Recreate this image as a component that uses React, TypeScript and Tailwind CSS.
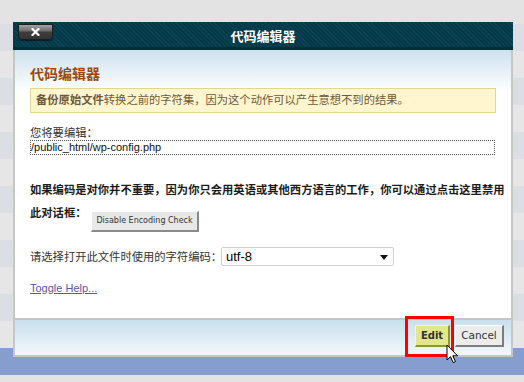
import React from "react";

const CJK = "font-['Liberation_Sans','Noto_Sans_CJK_SC',sans-serif]";

const STRIPES = Array.from({ length: 12 }, (_, i) => (i % 2 === 0 ? "bg-[#dbdfe4]" : "bg-[#e6e6e6]"));

function CloseButton() {
  return (
    <div className="ml-[5px] mt-[2px] w-[35px] h-[16px] rounded-b-[4px] border border-[#1d1d1d] bg-[linear-gradient(to_bottom,#a3a3a3_0px,#6b6b6b_6px,#3d3d3d_7px,#343434_100%)] shadow-[0_1px_1px_rgba(0,0,0,0.5)] flex items-center justify-center">
      <svg width="9" height="8" viewBox="0 0 9 8">
        <path d="M1.5 1 L7.5 7 M7.5 1 L1.5 7" stroke="#ffffff" strokeWidth="2.2" strokeLinecap="square" />
      </svg>
    </div>
  );
}

function Cursor() {
  return (
    <svg width="13" height="20" viewBox="0 0 13 20" className="absolute left-[446px] top-[344px]">
      <path
        d="M1 1 L1 16 L4.5 12.6 L7.2 18.6 L9.4 17.6 L6.8 11.8 L11.6 11.8 Z"
        fill="#ffffff"
        stroke="#000000"
        strokeWidth="1"
        strokeLinejoin="miter"
      />
    </svg>
  );
}

export default function App() {
  return (
    <div className={`relative w-[524px] h-[382px] overflow-hidden bg-[#e3e3e3] ${CJK}`}>
      {/* page behind the dialog */}
      <div className="flex flex-col h-full">
        <div className="h-[24px] shrink-0 bg-[#e3e3e3]" />
        {STRIPES.map((c, i) => (
          <div key={i} className={`h-[27px] shrink-0 ${c}`} />
        ))}
        <div className="h-[27px] shrink-0 bg-[#869dcf]" />
        <div className="flex-1 bg-[#e3e3e3]" />
      </div>

      {/* dialog */}
      <div className="absolute left-[13px] top-[22px] w-[500px] flex flex-col">
        <div className="h-[28px] border-b-[3px] border-[#032f3b] bg-[repeating-linear-gradient(45deg,#0b4354_0px,#0b4354_1px,#053a49_1px,#053a49_3px)] grid grid-cols-[1fr_auto_1fr] items-start">
          <CloseButton />
          <div className="text-white font-bold text-[13px] leading-[27px] mt-[1px]">代码编辑器</div>
          <div />
        </div>

        <div className="h-[268px] border-x-2 border-[#c6c6c6] bg-[linear-gradient(to_bottom,#cde1ee_0px,#ffffff_42px)] px-[15px] pt-[14px] flex flex-col">
          <div className="h-[20px] leading-[20px] text-[14px] font-bold text-[#9d4807]">代码编辑器</div>

          <div className="mt-[4px] h-[25px] border border-[#e4d78b] bg-[#fff5cf] px-[5px] text-[11.3px] leading-[23px] text-[#6e5a37]">
            <span className="font-bold">备份原始文件</span>转换之前的字符集，因为这个动作可以产生意想不到的结果。
          </div>

          <div className="mt-[13px] text-[11.3px] leading-[14px] text-[#333333]">您将要编辑：</div>
          <div className="w-[465px] h-[15px] border border-dotted border-[#555555] font-['Liberation_Sans',sans-serif] text-[11px] leading-[13px] text-[#111111]">
            /public_html/wp-config.php
          </div>

          <div className="mt-[23px] text-[11.3px] font-bold text-[#1c1c1c] leading-[24px] whitespace-nowrap">
            如果编码是对你并不重要，因为你只会用英语或其他西方语言的工作，你可以通过点击这里禁用
          </div>
          <div className="flex items-start">
            <div className="w-[61px] shrink-0 whitespace-nowrap text-[11.3px] font-bold text-[#1c1c1c] leading-[22px]">此对话框：</div>
            <button className="mt-[9px] h-[21px] w-[108px] bg-[#e8e8e8] border border-t-white border-l-white border-r-2 border-b-2 border-r-[#8a8a8a] border-b-[#8a8a8a] font-['DejaVu_Sans',sans-serif] text-[8px] text-[#333333] leading-[18px] px-0">
              Disable Encoding Check
            </button>
          </div>

          <div className="mt-[15px] flex items-center h-[19px]">
            <div className="w-[191px] shrink-0 whitespace-nowrap text-[11.3px] leading-[14px] text-[#333333]">请选择打开此文件时使用的字符编码：</div>
            <div className="relative w-[173px] shrink-0 h-[19px] border border-[#cfcfcf] rounded-[2px] bg-white flex items-center pl-[4px] font-['Liberation_Sans',sans-serif] text-[13px] text-black">
              utf-8
              <svg width="8" height="5" viewBox="0 0 8 5" className="absolute right-[5px] top-[7px]">
                <path d="M0 0 L8 0 L4 5 Z" fill="#111111" />
              </svg>
            </div>
          </div>

          <div className="mt-[15px] font-['Liberation_Sans',sans-serif] text-[11px] leading-[14px] text-[#5a57a0] underline">
            Toggle Help...
          </div>
        </div>

        <div className="h-[39px] border-2 border-[#c6c6c6] bg-[linear-gradient(to_bottom,#c9dfed,#f3f8fb)] flex justify-end items-start gap-[5px] pt-[5px] pr-[7px]">
          <button className="w-[35px] h-[22px] bg-[#e2e68c] border border-t-[#f4f6c6] border-l-[#f4f6c6] border-r-2 border-b-2 border-r-[#8a992e] border-b-[#8a992e] font-['DejaVu_Sans',sans-serif] font-bold text-[10px] text-[#333333] px-0">
            Edit
          </button>
          <button className="w-[49px] h-[22px] bg-[#ececec] border border-t-white border-l-white border-r-2 border-b-2 border-r-[#7d7d7d] border-b-[#7d7d7d] font-['DejaVu_Sans',sans-serif] text-[10.5px] text-[#333333] px-0">
            Cancel
          </button>
        </div>
      </div>

      {/* annotation highlight */}
      <div className="absolute left-[405px] top-[316px] w-[49px] h-[41px] border-[3px] border-[#ff0000]" />
      <Cursor />
    </div>
  );
}
